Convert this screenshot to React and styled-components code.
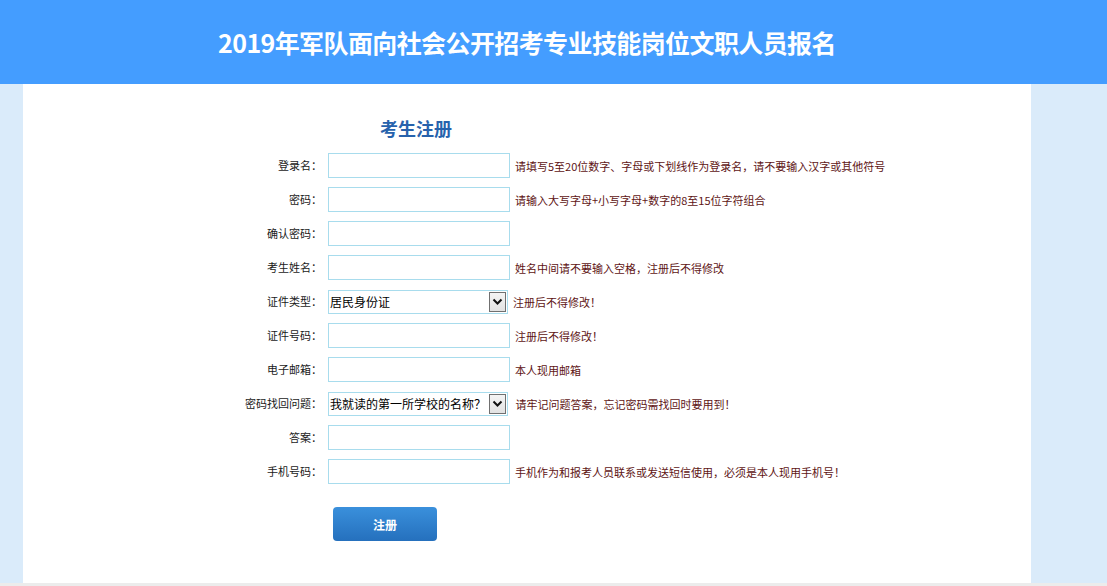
import React from "react";
import styled, { createGlobalStyle } from "styled-components";

const GlobalStyle = createGlobalStyle`
  html, body {
    margin: 0;
    padding: 0;
    background: #daebfa;
    font-family: "Noto Sans CJK SC", "Noto Sans", sans-serif;
  }
`;

const rows = [
  { label: "登录名：", hint: "请填写5至20位数字、字母或下划线作为登录名，请不要输入汉字或其他符号" },
  { label: "密码：", hint: "请输入大写字母+小写字母+数字的8至15位字符组合" },
  { label: "确认密码：", hint: "" },
  { label: "考生姓名：", hint: "姓名中间请不要输入空格，注册后不得修改" },
  { label: "证件类型：", select: "居民身份证", hint: "注册后不得修改！" },
  { label: "证件号码：", hint: "注册后不得修改！" },
  { label: "电子邮箱：", hint: "本人现用邮箱" },
  { label: "密码找回问题：", select: "我就读的第一所学校的名称？", hint: " 请牢记问题答案，忘记密码需找回时要用到！" },
  { label: "答案：", hint: "" },
  { label: "手机号码：", hint: "手机作为和报考人员联系或发送短信使用，必须是本人现用手机号！" },
];

const App = () => (
  <Page>
    <GlobalStyle />
    <Header>
      <HeaderInner>
        <Title>2019年军队面向社会公开招考专业技能岗位文职人员报名</Title>
      </HeaderInner>
    </Header>
    <Main>
      <Heading>考生注册</Heading>
      <Form>
        {rows.map((r) => (
          <React.Fragment key={r.label}>
            <Label>{r.label}</Label>
            {r.select ? (
              <SelectBox>
                <SelectText>{r.select}</SelectText>
                <Arrow>
                  <svg width="11" height="8" viewBox="0 0 11 8">
                    <path d="M1.5 1.5 L5.5 5.5 L9.5 1.5" fill="none" stroke="#111" strokeWidth="2" />
                  </svg>
                </Arrow>
              </SelectBox>
            ) : (
              <Input type="text" />
            )}
            <Hint $select={!!r.select}>{r.hint}</Hint>
          </React.Fragment>
        ))}
        <span />
        <Submit>注册</Submit>
        <span />
      </Form>
    </Main>
    <Footer />
  </Page>
);

const Page = styled.div`
  width: 1107px;
  min-height: 586px;
  overflow: hidden;
`;

const Header = styled.div`
  height: 84px;
  background: #449dff;
`;

const HeaderInner = styled.div`
  width: 1008px;
  margin-left: 23px;
  height: 84px;
  display: flex;
  align-items: center;
  justify-content: center;
`;

const Title = styled.h1`
  margin: 0;
  color: #fff;
  font-size: 25px;
  font-weight: 700;
  letter-spacing: -0.6px;
`;

const Main = styled.div`
  width: 1008px;
  margin-left: 23px;
  height: 499px;
  background: #fff;
  box-sizing: border-box;
  padding-top: 32px;
`;

const Heading = styled.h2`
  margin: 0 0 13px 357px;
  height: 24px;
  line-height: 24px;
  font-size: 18px;
  font-weight: 700;
  color: #2762ac;
`;

const Form = styled.div`
  display: grid;
  grid-template-columns: 195px 182px auto;
  column-gap: 5px;
  row-gap: 9px;
  margin-left: 105px;
  align-items: center;
`;

const Label = styled.div`
  text-align: right;
  font-size: 11px;
  color: #1a1a1a;
  height: 25px;
  line-height: 25px;
  margin-right: 1px;
`;

const Input = styled.input`
  box-sizing: border-box;
  width: 182px;
  height: 25px;
  margin: 0;
  border: 1px solid #a8dced;
  outline: none;
  background: #fff;
`;

const SelectBox = styled.div`
  box-sizing: border-box;
  position: relative;
  width: 180px;
  height: 24px;
  border: 1px solid #a8dced;
  display: flex;
  align-items: center;
`;

const SelectText = styled.span`
  font-size: 12px;
  color: #000;
  padding-left: 1px;
  white-space: nowrap;
`;

const Arrow = styled.span`
  position: absolute;
  right: 1px;
  top: 1px;
  bottom: 1px;
  width: 17px;
  box-sizing: border-box;
  border: 1px solid #707070;
  background: linear-gradient(#f4f4f4, #e2e2e2);
  display: flex;
  align-items: center;
  justify-content: center;
`;

const Hint = styled.div`
  font-size: 11px;
  color: #5e1414;
  white-space: pre;
  margin-left: ${(p) => (p.$select ? "-2px" : "0")};
`;

const Submit = styled.button`
  margin: 14px 0 0 5px;
  width: 104px;
  height: 34px;
  border: none;
  border-radius: 4px;
  background: linear-gradient(#3a90dc, #2570bd);
  color: #fff;
  font-family: "Noto Sans CJK SC", sans-serif;
  font-size: 12px;
  font-weight: 700;
  cursor: pointer;
`;

const Footer = styled.div`
  height: 3px;
  background: #ececec;
`;

export default App;
